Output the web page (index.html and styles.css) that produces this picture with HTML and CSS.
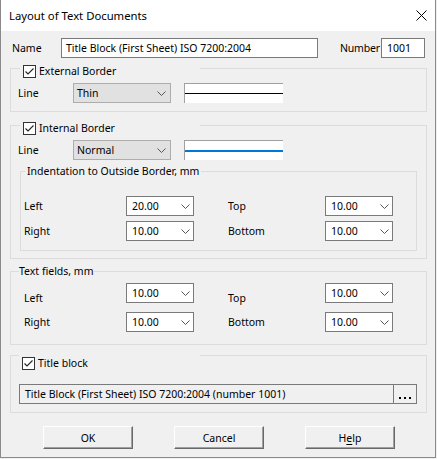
FILE: index.html
```html
<!DOCTYPE html>
<html>
<head>
<meta charset="utf-8">
<link rel="stylesheet" href="styles.css">
</head>
<body>
<div class="dialog">
  <div class="titlebar">
    <span class="title">Layout of Text Documents</span>
    <svg class="close" width="11" height="11" viewBox="0 0 11 11"><path d="M0.5 0.5 L10.5 10.5 M10.5 0.5 L0.5 10.5" stroke="#000" stroke-width="1" fill="none"/></svg>
  </div>
  <div class="content">
    <div class="name-row">
      <span class="name-lbl">Name</span>
      <div class="edit name-edit">Title Block (First Sheet) ISO 7200:2004</div>
      <span class="num-lbl">Number</span>
      <div class="edit num-edit">1001</div>
    </div>

    <fieldset class="group g-ext">
      <legend class="chk-legend">
        <svg class="chk" width="13" height="13" viewBox="0 0 13 13"><rect x="0.5" y="0.5" width="12" height="12" fill="#fff" stroke="#333"/><path d="M2.5 6.5 L5 9 L10.5 3.5" stroke="#222" stroke-width="1.1" fill="none"/></svg>
        <span class="chk-text">External Border</span>
      </legend>
      <div class="line-row">
        <span class="line-lbl">Line</span>
        <div class="dropdown"><span>Thin</span><svg class="chev" width="9" height="5" viewBox="0 0 9 5"><path d="M0.5 0.5 L4.5 4.5 L8.5 0.5" stroke="#555" fill="none"/></svg></div>
        <div class="preview"><div class="stroke stroke-thin"></div></div>
      </div>
    </fieldset>

    <fieldset class="group g-int">
      <legend class="chk-legend">
        <svg class="chk" width="13" height="13" viewBox="0 0 13 13"><rect x="0.5" y="0.5" width="12" height="12" fill="#fff" stroke="#333"/><path d="M2.5 6.5 L5 9 L10.5 3.5" stroke="#222" stroke-width="1.1" fill="none"/></svg>
        <span class="chk-text">Internal Border</span>
      </legend>
      <div class="line-row">
        <span class="line-lbl">Line</span>
        <div class="dropdown"><span>Normal</span><svg class="chev" width="9" height="5" viewBox="0 0 9 5"><path d="M0.5 0.5 L4.5 4.5 L8.5 0.5" stroke="#555" fill="none"/></svg></div>
        <div class="preview"><div class="stroke stroke-normal"></div></div>
      </div>
      <fieldset class="subgroup">
        <legend class="sub-legend">Indentation to Outside Border, mm</legend>
        <div class="grid grid-indent">
          <span class="lbl">Left</span>
          <div class="combo"><span>20.00</span><svg class="chev" width="9" height="5" viewBox="0 0 9 5"><path d="M0.5 0.5 L4.5 4.5 L8.5 0.5" stroke="#555" fill="none"/></svg></div>
          <span class="lbl lbl-col2">Top</span>
          <div class="combo"><span>10.00</span><svg class="chev" width="9" height="5" viewBox="0 0 9 5"><path d="M0.5 0.5 L4.5 4.5 L8.5 0.5" stroke="#555" fill="none"/></svg></div>
          <span class="lbl">Right</span>
          <div class="combo"><span>10.00</span><svg class="chev" width="9" height="5" viewBox="0 0 9 5"><path d="M0.5 0.5 L4.5 4.5 L8.5 0.5" stroke="#555" fill="none"/></svg></div>
          <span class="lbl lbl-col2">Bottom</span>
          <div class="combo"><span>10.00</span><svg class="chev" width="9" height="5" viewBox="0 0 9 5"><path d="M0.5 0.5 L4.5 4.5 L8.5 0.5" stroke="#555" fill="none"/></svg></div>
        </div>
      </fieldset>
    </fieldset>

    <fieldset class="group g-text">
      <legend class="text-legend">Text fields, mm</legend>
      <div class="grid grid-text">
        <span class="lbl lbl-low">Left</span>
        <div class="combo"><span>10.00</span><svg class="chev" width="9" height="5" viewBox="0 0 9 5"><path d="M0.5 0.5 L4.5 4.5 L8.5 0.5" stroke="#555" fill="none"/></svg></div>
        <span class="lbl lbl-low lbl-col2">Top</span>
        <div class="combo"><span>10.00</span><svg class="chev" width="9" height="5" viewBox="0 0 9 5"><path d="M0.5 0.5 L4.5 4.5 L8.5 0.5" stroke="#555" fill="none"/></svg></div>
        <span class="lbl">Right</span>
        <div class="combo"><span>10.00</span><svg class="chev" width="9" height="5" viewBox="0 0 9 5"><path d="M0.5 0.5 L4.5 4.5 L8.5 0.5" stroke="#555" fill="none"/></svg></div>
        <span class="lbl lbl-col2">Bottom</span>
        <div class="combo"><span>10.00</span><svg class="chev" width="9" height="5" viewBox="0 0 9 5"><path d="M0.5 0.5 L4.5 4.5 L8.5 0.5" stroke="#555" fill="none"/></svg></div>
      </div>
    </fieldset>

    <fieldset class="group g-title">
      <legend class="chk-legend tb-legend">
        <svg class="chk" width="13" height="13" viewBox="0 0 13 13"><rect x="0.5" y="0.5" width="12" height="12" fill="#fff" stroke="#333"/><path d="M2.5 6.5 L5 9 L10.5 3.5" stroke="#222" stroke-width="1.1" fill="none"/></svg>
        <span class="chk-text">Title block</span>
      </legend>
      <div class="tb-field">
        <span class="tb-text">Title Block (First Sheet) ISO 7200:2004 (number 1001)</span>
        <div class="dots-btn"><span class="dot"></span><span class="dot"></span><span class="dot"></span></div>
      </div>
    </fieldset>

    <div class="buttons">
      <div class="btn">OK</div>
      <div class="btn">Cancel</div>
      <div class="btn">H<u>e</u>lp</div>
    </div>
  </div>
</div>
</body>
</html>
```
FILE: styles.css
```css
* { box-sizing: border-box; }
html, body { margin: 0; padding: 0; }
body {
  background: #f0f0f0;
  font-family: "Noto Sans", "Open Sans", sans-serif;
  font-size: 10.5px;
  color: #000;
}
.dialog {
  width: 436px;
  height: 458px;
  border-left: 1px solid #8a8a8a;
  border-right: 1px solid #8a8a8a;
  border-bottom: 1px solid #8a8a8a;
  background: #f0f0f0;
  display: flex;
  flex-direction: column;
}
.titlebar {
  height: 31px;
  background: #fff;
  display: flex;
  align-items: center;
  padding-left: 8px;
  padding-right: 8px;
}
.title {
  font-size: 11.3px;
  flex: 1;
}
.close { display: block; }
.content {
  flex: 1;
  padding-top: 7px;
  display: flex;
  flex-direction: column;
}
.name-row {
  display: flex;
  align-items: center;
  height: 20px;
  padding-left: 11px;
}
.name-lbl { width: 49px; }
.edit {
  height: 20px;
  border: 1px solid #7a7a7a;
  background: #fff;
  display: flex;
  align-items: center;
  padding-left: 4px;
}
.name-edit { width: 257px; }
.num-lbl { margin-left: 22px; width: 41px; letter-spacing: -0.2px; white-space: nowrap; }
.num-edit { width: 44px; padding-left: 5px; }

.group {
  margin: 0 0 0 9px;
  width: 417px;
  padding: 0;
  border: 1px solid #dcdcdc;
  min-width: 0;
}
.chk-legend {
  margin-left: 9px;
  width: 180px;
  height: 20px;
  padding: 7px 0 0 3px;
  display: flex;
  align-items: center;
}
.chk { display: block; flex: none; margin-right: 3px; }
.chk-text { line-height: 15px; white-space: nowrap; }
.g-ext { padding-bottom: 8px; }
.g-int { margin-top: 3px; padding-bottom: 7px; }
.line-row {
  margin-top: 5px;
  height: 20px;
  display: flex;
  align-items: center;
  padding-left: 7px;
}
.line-lbl { width: 55px; }
.dropdown {
  width: 98px;
  height: 20px;
  background: #e1e1e1;
  border: 1px solid #adadad;
  display: flex;
  align-items: center;
  justify-content: space-between;
  padding-left: 3px;
  padding-right: 4px;
}
.chev { display: block; }
.preview {
  margin-left: 13px;
  width: 99px;
  height: 20px;
  background: #fff;
  border-top: 1px solid #a0a0a0;
  border-left: 1px solid #a0a0a0;
  display: flex;
  align-items: center;
}
.stroke { width: 100%; }
.stroke-thin { height: 1px; background: #000; }
.stroke-normal { height: 2px; background: #0078d7; }

.subgroup {
  margin: 3px 0 0 9px;
  width: 397px;
  padding: 0 0 9px 3px;
  border: 1px solid #dcdcdc;
  min-width: 0;
}
.sub-legend {
  margin-left: 1px;
  padding: 0 2px;
  height: 16px;
  line-height: 16px;
}
.grid {
  display: grid;
  grid-template-rows: 20px 20px;
  column-gap: 0;
  align-items: center;
}
.lbl-col2 { margin-left: 34px; }
.grid-indent { margin-top: 17px; row-gap: 5px; grid-template-columns: 102px 68px 131px 68px; }
.grid-text { margin-top: 4px; row-gap: 9px; grid-template-columns: 102px 68px 131px 68px; }
.lbl { line-height: 15px; }
.lbl-low { margin-top: 10px; }
.combo {
  width: 68px;
  height: 20px;
  border: 1px solid #7a7a7a;
  background: #fff;
  display: flex;
  align-items: center;
  justify-content: space-between;
  padding-left: 5px;
  padding-right: 3px;
}

.g-text { margin-top: 4px; padding: 0 0 12px 13px; }
.text-legend {
  margin-left: -5px;
  padding: 0;
  height: 16px;
  line-height: 16px;
}

.g-title { padding: 0 0 8px 8px; }
.tb-legend {
  margin-left: 0;
  width: 181px;
  padding: 0 0 0 3px;
  align-items: flex-start;
}
.tb-legend .chk { margin-top: 12px; }
.tb-legend .chk-text { margin-top: 12px; line-height: 13px; }
.tb-field {
  margin-top: 19px;
  width: 398px;
  height: 20px;
  border: 1px solid #7a7a7a;
  display: flex;
  align-items: stretch;
}
.tb-text {
  flex: 1;
  display: flex;
  align-items: center;
  padding-left: 5px;
}
.dots-btn {
  width: 23px;
  border-left: 1px solid #7a7a7a;
  display: flex;
  align-items: flex-end;
  justify-content: center;
  gap: 3px;
  padding-bottom: 4px;
}
.dot { width: 2px; height: 2px; background: #000; }

.buttons {
  margin-top: 13px;
  display: flex;
  gap: 41px;
  padding-left: 42px;
}
.btn {
  width: 90px;
  height: 23px;
  border: 1px solid;
  border-color: #fff #696969 #696969 #fff;
  box-shadow: inset -1px -1px 0 #a0a0a0;
  background: #f0f0f0;
  display: flex;
  align-items: center;
  justify-content: center;
}
.btn u { text-decoration-thickness: 1px; text-underline-offset: 2px; }
```
